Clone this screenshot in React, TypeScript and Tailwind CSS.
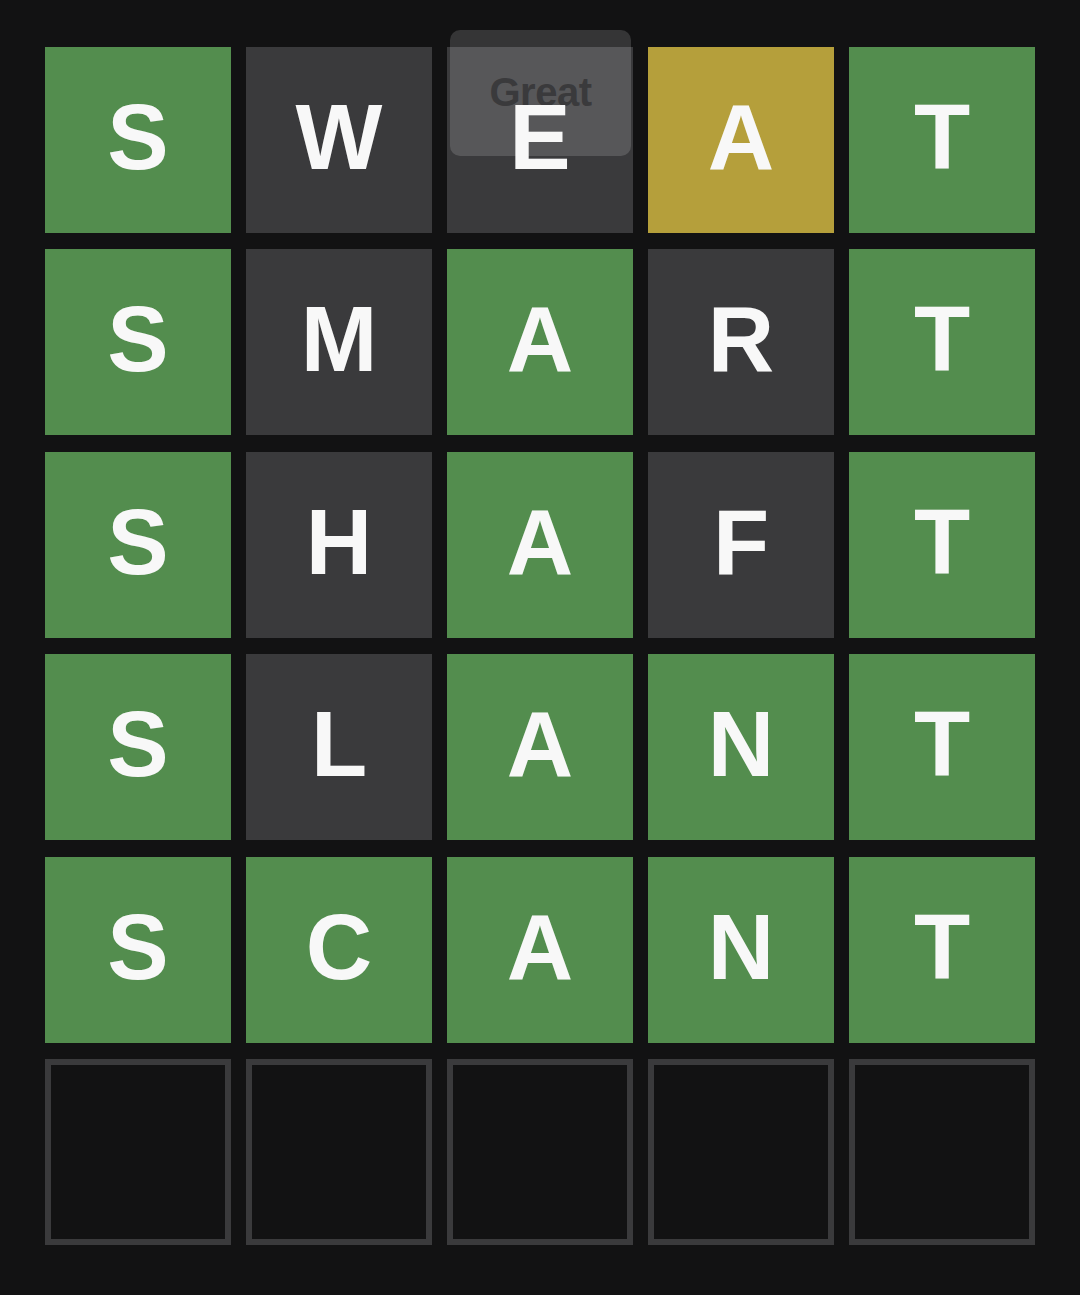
import React from 'react';

type TileState = 'correct' | 'present' | 'absent' | 'empty';

const rows: { letter: string; state: TileState }[][] = [
  [['S', 'correct'], ['W', 'absent'], ['E', 'absent'], ['A', 'present'], ['T', 'correct']],
  [['S', 'correct'], ['M', 'absent'], ['A', 'correct'], ['R', 'absent'], ['T', 'correct']],
  [['S', 'correct'], ['H', 'absent'], ['A', 'correct'], ['F', 'absent'], ['T', 'correct']],
  [['S', 'correct'], ['L', 'absent'], ['A', 'correct'], ['N', 'correct'], ['T', 'correct']],
  [['S', 'correct'], ['C', 'correct'], ['A', 'correct'], ['N', 'correct'], ['T', 'correct']],
  [['', 'empty'], ['', 'empty'], ['', 'empty'], ['', 'empty'], ['', 'empty']],
].map((r) => r.map(([letter, state]) => ({ letter, state: state as TileState })));

const tileClass: Record<TileState, string> = {
  correct: 'bg-[#538d4e]',
  present: 'bg-[#b59f3b]',
  absent: 'bg-[#3a3a3c]',
  empty: 'border-[6px] border-[#3a3a3c]',
};

function Tile({ letter, state }: { letter: string; state: TileState }) {
  return (
    <div className={`flex items-center justify-center ${tileClass[state]}`}>
      <span className="relative z-20 text-[92px] font-bold leading-none text-[#f8f8f8] mt-[-6px] font-['Liberation_Sans',Arial,sans-serif]">
        {letter}
      </span>
    </div>
  );
}

export default function App() {
  return (
    <div className="min-h-[1295px] w-full bg-[#121213] pt-[47px] pl-[45px]">
      <div className="relative w-[990px]">
        <div className="grid grid-cols-5 grid-rows-[repeat(6,186px)] gap-x-[15px] gap-y-[16.4px]">
          {rows.flat().map((t, i) => (
            <Tile key={i} letter={t.letter} state={t.state} />
          ))}
        </div>
        {/* toast over the first row */}
        <div className="absolute z-10 left-[405px] top-[-17px] flex h-[126px] w-[181px] items-center justify-center rounded-[10px] bg-white/15">
          <span className="mt-[-3px] text-[40px] font-bold leading-none tracking-[-0.5px] text-[#3a3a3c] font-['Liberation_Sans',Arial,sans-serif]">
            Great
          </span>
        </div>
      </div>
    </div>
  );
}
